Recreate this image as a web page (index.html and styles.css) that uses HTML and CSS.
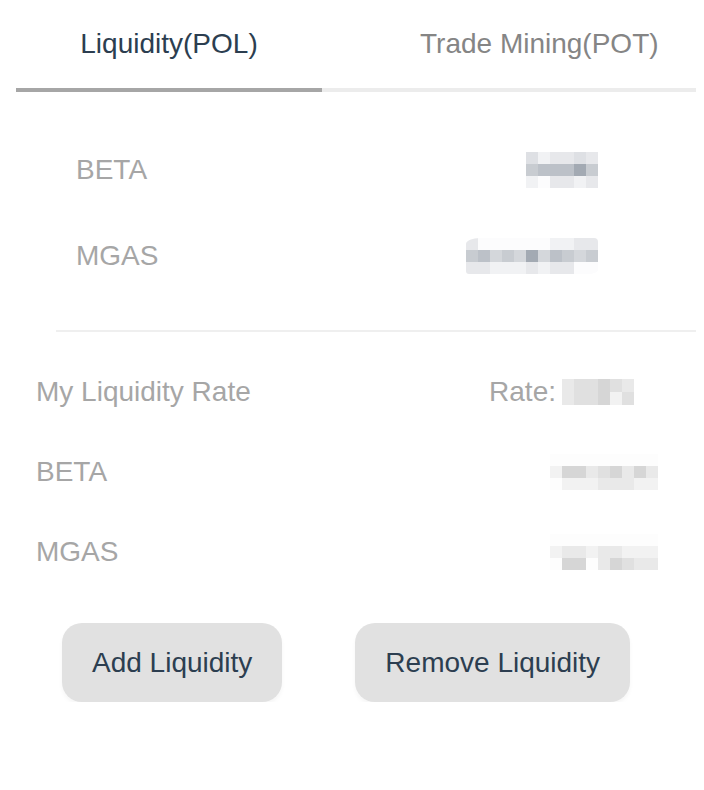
FILE: index.html
```html
<!DOCTYPE html>
<html>
<head>
<meta charset="utf-8">
<link rel="stylesheet" href="styles.css">
</head>
<body>
<div class="page">
  <div class="tabs">
    <div class="tab active">Liquidity(POL)</div>
    <div class="tab other">Trade Mining(POT)</div>
  </div>
  <div class="track"><div class="thumb"></div></div>

  <div class="pool">
    <div class="row">
      <span class="label">BETA</span>
      <span class="pix cols6 blue">
        <i class="b2"></i><i class="b0"></i><i class="b1"></i><i class="b1"></i><i class="b2"></i><i class="b1"></i>
        <i class="b4"></i><i class="b5"></i><i class="b5"></i><i class="b5"></i><i class="b7"></i><i class="b4"></i>
        <i class="b0"></i><i class="bw"></i><i class="b1"></i><i class="b1"></i><i class="b0"></i><i class="b1"></i>
      </span>
    </div>
    <div class="row">
      <span class="label">MGAS</span>
      <span class="pix cols11 blue wave">
        <i class="b1"></i><i class="bw"></i><i class="bw"></i><i class="bw"></i><i class="bw"></i><i class="bw"></i><i class="bw"></i><i class="b0"></i><i class="b0"></i><i class="b1"></i><i class="b1"></i>
        <i class="b4"></i><i class="b5"></i><i class="b3"></i><i class="b4"></i><i class="b3"></i><i class="b7"></i><i class="b3"></i><i class="b5"></i><i class="b4"></i><i class="b3"></i><i class="b4"></i>
        <i class="b1"></i><i class="b1"></i><i class="b0"></i><i class="b0"></i><i class="b0"></i><i class="b1"></i><i class="b0"></i><i class="b1"></i><i class="b1"></i><i class="bw"></i><i class="bw"></i>
      </span>
    </div>
  </div>

  <div class="divider"></div>

  <div class="mine">
    <div class="row2">
      <span class="label">My Liquidity Rate</span>
      <span class="rate">Rate:<span class="pix cols6 grey rv">
        <i class="g1"></i><i class="g2"></i><i class="g2"></i><i class="g3"></i><i class="g2"></i><i class="g1"></i>
        <i class="g1"></i><i class="g2"></i><i class="g2"></i><i class="g3"></i><i class="g0"></i><i class="g2"></i>
      </span></span>
    </div>
    <div class="row2">
      <span class="label">BETA</span>
      <span class="pix cols9 grey">
        <i class="gw"></i><i class="gw"></i><i class="gw"></i><i class="gw"></i><i class="gw"></i><i class="gw"></i><i class="gw"></i><i class="gw"></i><i class="gw"></i>
        <i class="g0"></i><i class="g3"></i><i class="g3"></i><i class="g1"></i><i class="g2"></i><i class="g3"></i><i class="g1"></i><i class="g3"></i><i class="g1"></i>
        <i class="gw"></i><i class="g0"></i><i class="g0"></i><i class="g0"></i><i class="g1"></i><i class="g1"></i><i class="g1"></i><i class="g0"></i><i class="g0"></i>
      </span>
    </div>
    <div class="row2">
      <span class="label">MGAS</span>
      <span class="pix cols9 grey">
        <i class="gw"></i><i class="gw"></i><i class="gw"></i><i class="gw"></i><i class="gw"></i><i class="gw"></i><i class="gw"></i><i class="gw"></i><i class="gw"></i>
        <i class="g0"></i><i class="g1"></i><i class="g1"></i><i class="g0"></i><i class="g1"></i><i class="g1"></i><i class="g0"></i><i class="g0"></i><i class="g0"></i>
        <i class="gw"></i><i class="g3"></i><i class="g3"></i><i class="gw"></i><i class="g1"></i><i class="g3"></i><i class="g2"></i><i class="g1"></i><i class="g1"></i>
      </span>
    </div>
  </div>

  <div class="actions">
    <button class="btn">Add Liquidity</button>
    <button class="btn">Remove Liquidity</button>
  </div>
</div>
</body>
</html>
```

FILE: styles.css
```css
* { box-sizing: border-box; }
html, body { margin: 0; padding: 0; background: #fff; }
body { font-family: "Liberation Sans", Arial, sans-serif; font-size: 28px; }

.page { padding: 0 8px 0 16px; width: 704px; }

.tabs { display: flex; height: 88px; align-items: center; }
.tab { line-height: 32px; white-space: nowrap; }
.tab.active { width: 306px; text-align: center; color: #2c3e50; }
.tab.other { padding-left: 98px; color: #858585; }

.track { height: 4px; background: #ececec; }
.thumb { width: 306px; height: 4px; background: #a6a6a6; }

.pool { padding: 35px 98px 0 60px; }
.row { height: 86px; display: flex; align-items: center; justify-content: space-between; }
.label { color: #a6a6a6; line-height: 32px; }

.divider { margin: 31px 0 0 40px; height: 2px; background: #efefef; }

.mine { padding: 20px 38px 0 20px; }
.row2 { height: 80px; display: flex; align-items: center; justify-content: space-between; }
.rate { color: #a6a6a6; display: flex; align-items: center; margin-right: 24px; }

.pix { display: grid; grid-auto-rows: 12px; }
.pix i { display: block; }
.cols6 { grid-template-columns: repeat(6, 12px); }
.cols9 { grid-template-columns: repeat(9, 12px); }
.cols11 { grid-template-columns: repeat(11, 12px); }
.rv { margin-left: 6px; grid-auto-rows: 13px; }
.wave { border-radius: 14px 4px 10px 3px / 6px 4px 4px 3px; overflow: hidden; }

.bw { background: #fcfcfd; }
.b0 { background: #f1f2f4; }
.b1 { background: #e7e8eb; }
.b2 { background: #dee0e4; }
.b3 { background: #d4d7db; }
.b4 { background: #c8ccd1; }
.b5 { background: #bcc1c8; }
.b7 { background: #a3aab3; }

.gw { background: #fdfdfd; }
.g0 { background: #f2f2f2; }
.g1 { background: #e9e9e9; }
.g2 { background: #e0e0e0; }
.g3 { background: #d6d6d6; }

.actions { display: flex; gap: 73px; margin: 31px 0 0 46px; }
.btn {
  font-family: "Liberation Sans", Arial, sans-serif;
  font-size: 28px;
  color: #2c3e50;
  background: #e1e1e1;
  border: none;
  border-radius: 20px;
  height: 79px;
  padding: 0 30px;
  box-shadow: 0 3px 4px rgba(0, 0, 0, 0.04);
}
```
